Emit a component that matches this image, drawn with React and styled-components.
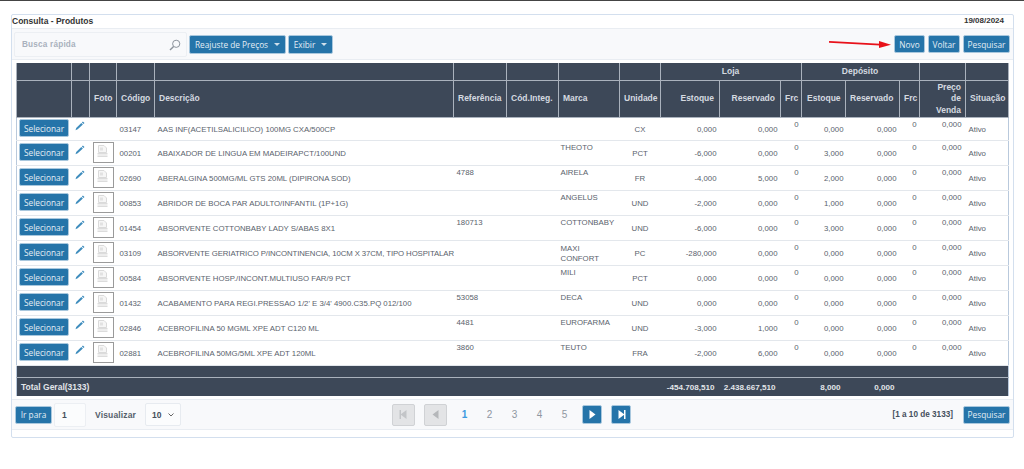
import * as React from "react";
import styled, { createGlobalStyle } from "styled-components";

const rows = [
  { cod: "03147", desc: "AAS INF(ACETILSALICILICO) 100MG CXA/500CP", ref: "", marca: "", un: "CX", est: "0,000", res: "0,000", dep: "0,000", foto: false },
  { cod: "00201", desc: "ABAIXADOR DE LINGUA EM MADEIRAPCT/100UND", ref: "", marca: "THEOTO", un: "PCT", est: "-6,000", res: "0,000", dep: "3,000", foto: true },
  { cod: "02690", desc: "ABERALGINA 500MG/ML GTS 20ML (DIPIRONA SOD)", ref: "4788", marca: "AIRELA", un: "FR", est: "-4,000", res: "5,000", dep: "2,000", foto: true },
  { cod: "00853", desc: "ABRIDOR DE BOCA PAR ADULTO/INFANTIL (1P+1G)", ref: "", marca: "ANGELUS", un: "UND", est: "-2,000", res: "0,000", dep: "1,000", foto: true },
  { cod: "01454", desc: "ABSORVENTE COTTONBABY LADY S/ABAS 8X1", ref: "180713", marca: "COTTONBABY", un: "UND", est: "-6,000", res: "0,000", dep: "3,000", foto: true },
  { cod: "03109", desc: "ABSORVENTE GERIATRICO P/INCONTINENCIA, 10CM X 37CM, TIPO HOSPITALAR", ref: "", marca: "MAXI CONFORT", un: "PC", est: "-280,000", res: "0,000", dep: "0,000", foto: true },
  { cod: "00584", desc: "ABSORVENTE HOSP./INCONT.MULTIUSO FAR/9 PCT", ref: "", marca: "MILI", un: "PCT", est: "0,000", res: "0,000", dep: "0,000", foto: true },
  { cod: "01432", desc: "ACABAMENTO PARA REGI.PRESSAO 1/2' E 3/4' 4900.C35.PQ 012/100", ref: "53058", marca: "DECA", un: "UND", est: "0,000", res: "0,000", dep: "0,000", foto: true },
  { cod: "02846", desc: "ACEBROFILINA 50 MGML XPE ADT C120 ML", ref: "4481", marca: "EUROFARMA", un: "UND", est: "-3,000", res: "1,000", dep: "0,000", foto: true },
  { cod: "02881", desc: "ACEBROFILINA 50MG/5ML XPE ADT 120ML", ref: "3860", marca: "TEUTO", un: "FRA", est: "-2,000", res: "6,000", dep: "0,000", foto: true },
];

const colWidths = [55, 18, 27, 38, 299, 53, 52, 61, 41, 59, 61, 21, 44, 54, 20, 46, 43];

const GlobalStyle = createGlobalStyle`
  html, body {
    margin: 0;
    background: #fff;
    font-family: "Liberation Sans", Arial, sans-serif;
  }
`;

const Page = styled.div`
  position: relative;
  width: 1024px;
  height: 469px;
  overflow: hidden;
  border-top: 1px solid #444;
  box-sizing: border-box;
  padding: 13px 0 0 11px;
`;

const Panel = styled.div`
  width: 1003px;
  height: 424px;
  box-sizing: border-box;
  border: 1px solid #d3dfee;
  border-radius: 2px;
  background: #fff;
`;

const TitleBar = styled.div`
  height: 13px;
  box-sizing: border-box;
  padding: 0 9px 2px 0;
  display: flex;
  justify-content: space-between;
  align-items: center;
  font-size: 8.5px;
  font-weight: 700;
  color: #333;
`;

const DateText = styled.span`
  font-size: 8px;
`;

const Toolbar = styled.div`
  height: 32px;
  box-sizing: border-box;
  background: #f8f9fb;
  border-top: 1px solid #e9edf2;
  border-bottom: 1px solid #e9edf2;
  display: flex;
  align-items: center;
  padding: 0 3px 0 2px;
  gap: 2px;
`;

const SearchBox = styled.div`
  width: 173px;
  height: 25px;
  box-sizing: border-box;
  background: #f8f9fb;
  border: 1px solid #eceff3;
  border-radius: 2px;
  display: flex;
  align-items: center;
  justify-content: space-between;
  padding: 1px 5px 0 7px;
  font-size: 8.2px;
  font-weight: 700;
  color: #a9b1bd;
  letter-spacing: 0.2px;
`;

const Button = styled.button`
  height: ${(p) => p.$h || 19}px;
  box-sizing: border-box;
  background: #2574a9;
  border: 1px solid #a9c8de;
  border-radius: 2px;
  color: #e4eef5;
  font-family: "Open Sans", sans-serif;
  font-size: 8.3px;
  padding: 0;
  display: flex;
  align-items: center;
  justify-content: center;
  gap: 6px;
  white-space: nowrap;
  flex: none;
  width: ${(p) => p.$w}px;
`;

const Caret = styled.i`
  width: 0;
  height: 0;
  border-left: 3px solid transparent;
  border-right: 3px solid transparent;
  border-top: 3px solid #cfe0ec;
`;

const Spacer = styled.div`
  flex: 1;
`;

const ToolbarRight = styled.div`
  display: flex;
  gap: 3px;
`;

const Grid = styled.table`
  margin: 3px 0 0 4px;
  width: 992px;
  table-layout: fixed;
  border-collapse: collapse;
  border-left: 1px solid #b9c9dc;
  border-right: 1px solid #b9c9dc;
`;

const HeadCell = styled.th`
  background: #3d4858;
  border: 1px solid #aab2bd;
  border-top: none;
  color: #d5dae0;
  font-size: 8.5px;
  font-weight: 700;
  line-height: 11.5px;
  padding: 0 ${(p) => p.$pr ?? 5}px 0 ${(p) => p.$pl ?? 4}px;
  height: ${(p) => p.$h || 36}px;
  text-align: ${(p) => p.$align || "left"};
  overflow: hidden;
  white-space: nowrap;
`;

const Row = styled.tr`
  height: ${(p) => (p.$first ? 23 : 25)}px;
  border-bottom: 1px solid #e3e7ec;
  &:last-child {
    border-bottom: 1px solid #8f98a3;
  }
`;

const Cell = styled.td`
  font-size: 7.8px;
  line-height: 10px;
  color: #5a626c;
  padding: 2px ${(p) => p.$pr ?? 2}px 0 ${(p) => p.$pl ?? 2}px;
  text-align: ${(p) => p.$align || "left"};
  vertical-align: middle;
  white-space: nowrap;
  overflow: hidden;
`;

const ActionCell = styled(Cell)`
  padding-top: 0;
  padding-bottom: 2px;
`;

const DescCell = styled(Cell)`
  letter-spacing: ${(p) => (p.$tight ? "-0.1px" : "0")};
`;

const RaisedCell = styled(Cell)`
  vertical-align: top;
  padding-top: ${(p) => p.$top ?? 2}px;
  white-space: normal;
`;

const Thumb = styled.div`
  width: 21px;
  height: 21px;
  box-sizing: border-box;
  margin-left: 3px;
  border: 1px solid #9a9a9a;
  display: flex;
  align-items: flex-start;
  justify-content: flex-start;
  padding: 2px 0 0 3px;
`;

const FooterCell = styled.td`
  background: #3d4858;
  height: ${(p) => p.$h}px;
  padding: 0 ${(p) => p.$pr ?? 0}px 0 ${(p) => p.$pl ?? 0}px;
  color: #e2e5e9;
  font-size: ${(p) => p.$fs || 8.1}px;
  font-weight: 700;
  text-align: ${(p) => p.$align || "left"};
  white-space: nowrap;
`;

const BlankRow = styled.tr`
  border-bottom: 1px solid #aab2bd;
`;

const Pager = styled.div`
  margin-top: 3px;
  height: 31px;
  box-sizing: border-box;
  background: #f8f9fb;
  border-top: 1px solid #e9edf2;
  border-bottom: 1px solid #e9edf2;
  display: flex;
  align-items: center;
  padding: 0 3px;
  font-size: 8.5px;
  color: #555f6b;
`;

const PageInput = styled.div`
  width: 32px;
  height: 24px;
  box-sizing: border-box;
  margin-left: 2px;
  background: #fbfcfd;
  border: 1px solid #eceff3;
  border-radius: 2px;
  display: flex;
  align-items: center;
  padding-left: 7px;
  font-weight: 700;
  color: #454f5c;
`;

const PagerLabel = styled.span`
  margin: 0 9px;
  font-weight: 700;
  letter-spacing: 0.15px;
  color: #555f6b;
`;

const SizeSelect = styled.div`
  width: 36px;
  height: 23px;
  box-sizing: border-box;
  background: #fbfcfd;
  border: 1px solid #e7ebf0;
  border-radius: 2px;
  display: flex;
  align-items: center;
  justify-content: space-between;
  padding: 0 6px;
  font-weight: 700;
  color: #454f5c;
`;

const Pages = styled.div`
  display: flex;
  align-items: center;
  margin-left: 211px;
`;

const NavButton = styled.div`
  width: ${(p) => p.$w || 23}px;
  height: ${(p) => p.$h || 22}px;
  box-sizing: border-box;
  border-radius: 2px;
  display: flex;
  align-items: center;
  justify-content: center;
  margin-right: ${(p) => p.$mr || 0}px;
  margin-left: ${(p) => p.$ml || 0}px;
  background: ${(p) => (p.$off ? "#e3e4e6" : "#2574a9")};
  border: 1px solid ${(p) => (p.$off ? "#d0d2d5" : "#a9c8de")};
`;

const PageNum = styled.span`
  width: 25px;
  text-align: center;
  font-size: 10px;
  color: ${(p) => (p.$active ? "#3d9be0" : "#8f97a1")};
  font-weight: ${(p) => (p.$active ? 700 : 400)};
`;

const RangeText = styled.span`
  font-size: 8.2px;
  font-weight: 700;
  color: #454f5c;
  margin-right: 10px;
`;

const ArrowOverlay = styled.svg`
  position: absolute;
  left: 825px;
  top: 36px;
`;

const PencilSvg = styled.svg`
  display: block;
  margin: -5px 0 0 1px;
`;

const Pencil = () => (
  <PencilSvg width="10" height="10" viewBox="0 0 10 10">
    <path d="M7.9.4l1.6 1.5-1 1.1-1.6-1.5zM6.3 2.1l1.6 1.5-5.2 4.7-2.2.9.7-2.2z" fill="#3f8dbd" />
  </PencilSvg>
);

const DocIcon = () => (
  <svg width="11" height="13" viewBox="0 0 11 13">
    <path d="M1.5 .5h5.5l2.5 2.5v4.5h-8z" fill="#f6f6f6" stroke="#dadada" />
    <path d="M.5 8h10v1.6H.5zM.5 10.6h10V12H.5z" fill="#dcdcdc" />
    <path d="M3 2.5h3v3H3z" fill="#e2e2e2" />
  </svg>
);

const Lens = () => (
  <svg width="12" height="12" viewBox="0 0 12 12" fill="none" stroke="#8b929b" strokeWidth="1">
    <circle cx="7.2" cy="4.8" r="3.6" />
    <path d="M4.6 7.4L1 11" strokeWidth="1.4" />
  </svg>
);

const NavIcon = ({ dir, bar, color }) => (
  <svg width="11" height="11" viewBox="0 0 11 11" fill={color}>
    {dir === "left" ? <path d="M8.5 1v9L2.5 5.5z" /> : <path d="M2.5 1v9l6-4.5z" />}
    {bar && (dir === "left" ? <path d="M1.5 1h1.5v9H1.5z" /> : <path d="M8 1h1.5v9H8z" />)}
  </svg>
);

function App() {
  return (
    <Page>
      <GlobalStyle />
      <Panel>
        <TitleBar>
          <span>Consulta - Produtos</span>
          <DateText>19/08/2024</DateText>
        </TitleBar>
        <Toolbar>
          <SearchBox>
            Busca rápida
            <Lens />
          </SearchBox>
          <Button $w={97}>
            Reajuste de Preços <Caret />
          </Button>
          <Button $w={45}>
            Exibir <Caret />
          </Button>
          <Spacer />
          <ToolbarRight>
            <Button $w={31} $h={18}>Novo</Button>
            <Button $w={32} $h={18}>Voltar</Button>
            <Button $w={47} $h={18}>Pesquisar</Button>
          </ToolbarRight>
        </Toolbar>
        <Grid>
          <colgroup>
            {colWidths.map((w, i) => (
              <col key={i} style={{ width: w }} />
            ))}
          </colgroup>
          <thead>
            <tr>
              {colWidths.slice(0, 9).map((w, i) => (
                <HeadCell key={i} $h={17} />
              ))}
              <HeadCell $h={17} colSpan={3} $align="center">Loja</HeadCell>
              <HeadCell $h={17} colSpan={3} $align="center">Depósito</HeadCell>
              <HeadCell $h={17} />
              <HeadCell $h={17} />
            </tr>
            <tr>
              <HeadCell />
              <HeadCell />
              <HeadCell>Foto</HeadCell>
              <HeadCell>Código</HeadCell>
              <HeadCell>Descrição</HeadCell>
              <HeadCell>Referência</HeadCell>
              <HeadCell>Cód.Integ.</HeadCell>
              <HeadCell>Marca</HeadCell>
              <HeadCell>Unidade</HeadCell>
              <HeadCell $align="right">Estoque</HeadCell>
              <HeadCell $align="right">Reservado</HeadCell>
              <HeadCell>Frc</HeadCell>
              <HeadCell $pl={5}>Estoque</HeadCell>
              <HeadCell>Reservado</HeadCell>
              <HeadCell>Frc</HeadCell>
              <HeadCell $align="right" $pr={4}>Preço<br />de<br />Venda</HeadCell>
              <HeadCell>Situação</HeadCell>
            </tr>
          </thead>
          <tbody>
            {rows.map((r, i) => (
              <Row key={r.cod} $first={i === 0}>
                <ActionCell $pl={2}>
                  <Button $w={50} $h={18}>Selecionar</Button>
                </ActionCell>
                <ActionCell><Pencil /></ActionCell>
                <ActionCell $pl={0}>{r.foto && <Thumb><DocIcon /></Thumb>}</ActionCell>
                <Cell $pl={3}>{r.cod}</Cell>
                <DescCell $pl={3} $tight={r.desc.length > 65}>{r.desc}</DescCell>
                <RaisedCell $pl={3}>{r.ref}</RaisedCell>
                <Cell />
                <RaisedCell $pl={2} $top={r.marca.includes(" ") ? 3 : 2}>{r.marca}</RaisedCell>
                <Cell $align="center">{r.un}</Cell>
                <Cell $align="right" $pr={3}>{r.est}</Cell>
                <Cell $align="right" $pr={3}>{r.res}</Cell>
                <RaisedCell $align="right" $pr={3}>0</RaisedCell>
                <Cell $align="right" $pr={2}>{r.dep}</Cell>
                <Cell $align="right" $pr={3}>0,000</Cell>
                <RaisedCell $align="right" $pr={3}>0</RaisedCell>
                <RaisedCell $align="right" $pr={4}>0,000</RaisedCell>
                <Cell $pl={3}>Ativo</Cell>
              </Row>
            ))}
            <BlankRow>
              <FooterCell $h={11} colSpan={17} />
            </BlankRow>
            <tr>
              <FooterCell $h={18} colSpan={9} $pl={4} $fs={8.5}>Total Geral(3133)</FooterCell>
              <FooterCell $h={18} $align="right" $pr={5}>-454.708,510</FooterCell>
              <FooterCell $h={18} $align="right" $pr={5}>2.438.667,510</FooterCell>
              <FooterCell $h={18} />
              <FooterCell $h={18} $align="right" $pr={5}>8,000</FooterCell>
              <FooterCell $h={18} $align="right" $pr={5}>0,000</FooterCell>
              <FooterCell $h={18} colSpan={3} />
            </tr>
          </tbody>
        </Grid>
        <Pager>
          <Button $w={37} $h={18}>Ir para</Button>
          <PageInput>1</PageInput>
          <PagerLabel>Visualizar</PagerLabel>
          <SizeSelect>
            10
            <svg width="6" height="4" viewBox="0 0 6 4" fill="none" stroke="#666" strokeWidth="1">
              <path d="M.5.5L3 3 5.5.5" />
            </svg>
          </SizeSelect>
          <Pages>
            <NavButton $off><NavIcon dir="left" bar color="#c3c5c8" /></NavButton>
            <NavButton $off $ml={9} $mr={5}><NavIcon dir="left" color="#b5b7ba" /></NavButton>
            <PageNum $active>1</PageNum>
            <PageNum>2</PageNum>
            <PageNum>3</PageNum>
            <PageNum>4</PageNum>
            <PageNum>5</PageNum>
            <NavButton $w={20} $h={19} $ml={5}><NavIcon dir="right" color="#fff" /></NavButton>
            <NavButton $w={20} $h={19} $ml={9}><NavIcon dir="right" bar color="#fff" /></NavButton>
          </Pages>
          <Spacer />
          <RangeText>[1 a 10 de 3133]</RangeText>
          <Button $w={47} $h={18}>Pesquisar</Button>
        </Pager>
      </Panel>
      <ArrowOverlay width="68" height="14" viewBox="0 0 68 14">
        <path d="M4 4.8L55 7.6" stroke="#e8111a" strokeWidth="1.8" />
        <path d="M54 4L66 7.8 54 11z" fill="#e8111a" />
      </ArrowOverlay>
    </Page>
  );
}

export default App;
